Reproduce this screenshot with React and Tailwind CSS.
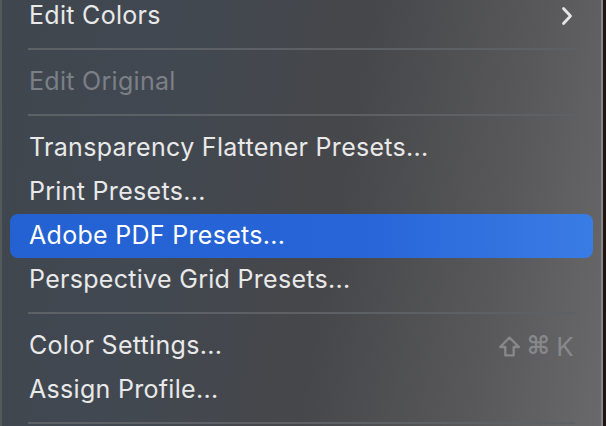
import { Fragment } from "react";

const items = [
  { label: "Edit Colors", submenu: true },
  { sep: true },
  { label: "Edit Original", disabled: true },
  { sep: true },
  { label: "Transparency Flattener Presets..." },
  { label: "Print Presets..." },
  { label: "Adobe PDF Presets...", active: true },
  { label: "Perspective Grid Presets..." },
  { sep: true },
  { label: "Color Settings...", shortcut: true },
  { label: "Assign Profile..." },
  { sep: true },
];

function Chevron() {
  return (
    <svg width="14" height="20" viewBox="0 0 14 20" fill="none">
      <path
        d="M3.5 2.5 L10.5 10 L3.5 17.5"
        stroke="#e6e6e6"
        strokeWidth="2.8"
        strokeLinecap="round"
        strokeLinejoin="round"
      />
    </svg>
  );
}

// outlined shift arrow
function ShiftIcon() {
  return (
    <svg width="23" height="23" viewBox="0 0 22 22" fill="none">
      <path
        d="M11 2.5 L20 11.5 H15 V19.5 H7 V11.5 H2 Z"
        stroke="#88888b"
        strokeWidth="2.2"
        strokeLinejoin="round"
      />
    </svg>
  );
}

export default function App() {
  return (
    <main className="h-[426px] w-[606px] overflow-hidden bg-[#1c1715] flex font-['Inter','Liberation_Sans',sans-serif]">
      <section className="h-full w-[603px] border-l-2 border-r-2 border-l-[#55585c] border-r-[#85858a] bg-[linear-gradient(100deg,#3f464e_0%,#414851_25%,#46474a_55%,#58585a_80%,#69696c_100%)]">
        <ul className="-mt-[6px] px-[8px]">
          {items.map((item, i) => (
            <Fragment key={i}>
              {item.sep ? (
                <li className="h-[22px] flex items-center px-[18px]">
                  <div className="h-[2px] w-full bg-[#5d6064]" />
                </li>
              ) : (
                <li
                  className={`h-[44px] flex items-center justify-between rounded-[8px] pl-[19px] pr-[19px] text-[25px] tracking-[0.3px] ${
                    item.active
                      ? "bg-[linear-gradient(90deg,#2461d2_0%,#2765d8_60%,#3a7ce5_100%)] text-white"
                      : item.disabled
                      ? "text-[#7c8086]"
                      : "text-[#e9e9e9]"
                  }`}
                >
                  <span>{item.label}</span>
                  {item.submenu && <Chevron />}
                  {item.shortcut && (
                    <span className="flex items-center gap-[6px] text-[#88888b]">
                      <ShiftIcon />
                      <span className="font-['DejaVu_Sans',sans-serif] text-[25px] font-bold">⌘</span>
                      <span className="text-[26px]">K</span>
                    </span>
                  )}
                </li>
              )}
            </Fragment>
          ))}
        </ul>
      </section>
    </main>
  );
}
